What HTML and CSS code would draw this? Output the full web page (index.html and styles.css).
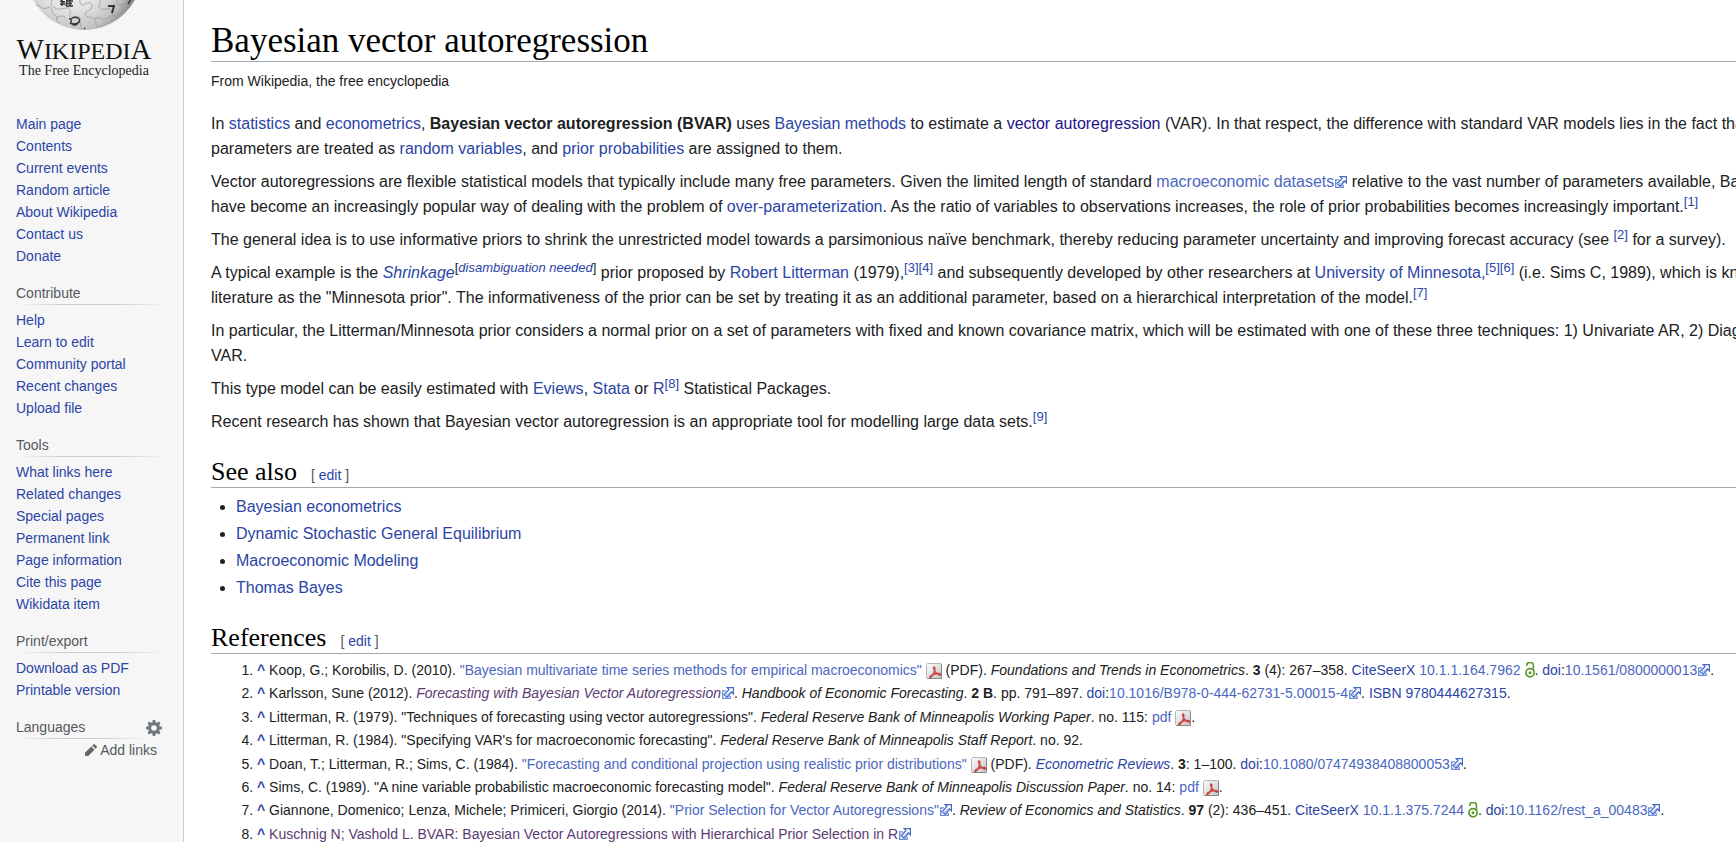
FILE: index.html
```html
<!DOCTYPE html>
<html lang="en">
<head>
<meta charset="utf-8">
<title>Bayesian vector autoregression - Wikipedia</title>
<link rel="stylesheet" href="styles.css">
</head>
<body>
<svg class="sprite" aria-hidden="true">
  <defs>
    <linearGradient id="page-fill" x1="0" y1="0" x2="1" y2="1"><stop offset="0" stop-color="#fff"/><stop offset="1" stop-color="#c4c4c4"/></linearGradient>
    <symbol id="ext" viewBox="0 0 12 12">
      <path d="M4 3.800H.7v7.500h7.500V9" fill="#fff" stroke="#6c8ad6" stroke-width="1.300"/>
      <path d="M5.200.6h6.200v6.200L9.500 5 6.800 8.800 5 10.200 2 7.600l1.600-1.400L7 2.500z" fill="#fff" stroke="#4468c8" stroke-width="1.200"/>
      <path d="M4.200 7.700l1.300.6 3-3.700" fill="none" stroke="#6c8ad6"/>
    </symbol>
    <symbol id="pdf" viewBox="0 0 16 16">
      <path d="M1.500.5h13a1 1 0 0 1 1 1v13a1 1 0 0 1-1 1h-13l-1-1v-13z" fill="url(#page-fill)" stroke="#b4b4b4"/>
      <path d="M15.500 1v14.500H1" fill="none" stroke="#888"/>
      <path d="M8 4c1.400 0 .8 3 .3 4.700C7.300 11.500 5.500 14 4.500 14.500c-1.300.4-1-1 1-2.200 2-1.200 4.500-1.800 7-1.800 2.800 0 2.700 1.700.9 1.500C11.200 11.500 8.600 8.500 8 6.500 7.500 5 7.400 4 8 4z" fill="none" stroke="#cb4543" stroke-width="1.400"/>
    </symbol>
    <symbol id="lock" viewBox="0 0 10 16">
      <circle cx="5" cy="10.800" r="4.100" fill="none" stroke="#5b9a2b" stroke-width="1.700"/>
      <circle cx="5" cy="10.800" r="1.500" fill="#5b9a2b"/>
      <path d="M1.700 4V3.300a2.900 2.500 0 0 1 6.700 0V9" fill="none" stroke="#5b9a2b" stroke-width="1.600"/>
    </symbol>
  </defs>
</svg>
<div class="layout">
  <nav class="sidebar">
    <a class="logo" href="#" aria-label="Wikipedia, the free encyclopedia">
      <svg class="globe" viewBox="0 0 120 31" aria-hidden="true">
        <defs><radialGradient id="ball" gradientUnits="userSpaceOnUse" cx="48" cy="-22" r="66"><stop offset="0" stop-color="#fff"/><stop offset=".5" stop-color="#e2e2e2"/><stop offset=".8" stop-color="#c2c2c2"/><stop offset="1" stop-color="#858585"/></radialGradient></defs>
        <circle cx="60" cy="-28" r="58" fill="url(#ball)"/>
        <g fill="none" stroke="#999" stroke-width=".8">
          <path d="M12 5c5 0 6 5 11 3 3-2 5 0 5 3 0 4 5 4 5 7-1 3 1 4 3 5"/>
          <path d="M28 0c-2 4 0 6 3 8s7 1 11 0c3-1 5 2 4 5-1 4 2 6 5 4 4-2 6 1 5 4-1 3 2 6 2 8"/>
          <path d="M56 0c-1 5 3 6 5 4 4-3 8-1 7 3-1 4-6 3-7 7 0 4 5 2 9 5 3 2 1 5 3 8"/>
          <path d="M76 0c1 4-3 6 0 8 3 3 6 0 9 1 4 1 2 6 5 7 2 1 4-2 6-1M93 0c-1 4 2 6 4 5 3-1 5-2 7 0M33 18c4-3 7-2 9 0M70 19c5-3 7 1 11 0 4-2 6-4 10-3"/>
        </g>
        <g fill="none" stroke="#333" stroke-width="1.400">
          <path d="M38 0v6M36 1l5 1M36 4h5M43 0l-1 6M42 1h7M42 3.500h6M42 6h7M46 0v6"/>
          <path d="M84 6h6l-2 7" stroke-width="2"/>
          <path d="M45 19c4-2 2 4 1 4M48 18c5-2 9 1 7 4s-8 2-9 1M48 24c2 2 5 1 6-1"/>
          <path d="M108-2l-4 6M60 28l1 1"/>
        </g>
      </svg>
      <span class="wordmark"><span class="wordmark-cap">W</span>IKIPEDI<span class="wordmark-cap">A</span></span>
      <span class="tagline">The Free Encyclopedia</span>
    </a>
    <section class="portal">
      <ul>
        <li><a href="#">Main page</a></li><li><a href="#">Contents</a></li><li><a href="#">Current events</a></li><li><a href="#">Random article</a></li><li><a href="#">About Wikipedia</a></li><li><a href="#">Contact us</a></li><li><a href="#">Donate</a></li>
      </ul>
    </section>
    <section class="portal">
      <h3>Contribute</h3>
      <ul>
        <li><a href="#">Help</a></li><li><a href="#">Learn to edit</a></li><li><a href="#">Community portal</a></li><li><a href="#">Recent changes</a></li><li><a href="#">Upload file</a></li>
      </ul>
    </section>
    <section class="portal">
      <h3>Tools</h3>
      <ul>
        <li><a href="#">What links here</a></li><li><a href="#">Related changes</a></li><li><a href="#">Special pages</a></li><li><a href="#">Permanent link</a></li><li><a href="#">Page information</a></li><li><a href="#">Cite this page</a></li><li><a href="#">Wikidata item</a></li>
      </ul>
    </section>
    <section class="portal">
      <h3>Print/export</h3>
      <ul>
        <li><a href="#">Download as PDF</a></li><li><a href="#">Printable version</a></li>
      </ul>
    </section>
    <section class="portal">
      <div class="lang-head">
        <h3>Languages</h3>
        <button class="gear" type="button" aria-label="Language settings">
          <svg viewBox="0 0 16 16" width="16" height="16"><g fill="#72777d"><path fill-rule="evenodd" d="M8 2a6 6 0 1 0 0 12A6 6 0 0 0 8 2zm0 3.200a2.800 2.800 0 1 1 0 5.600 2.800 2.800 0 0 1 0-5.600z"/><path id="tooth" d="M6.300 3l.5-3h2.400l.5 3z"/><use href="#tooth" transform="rotate(45 8 8)"/><use href="#tooth" transform="rotate(90 8 8)"/><use href="#tooth" transform="rotate(135 8 8)"/><use href="#tooth" transform="rotate(180 8 8)"/><use href="#tooth" transform="rotate(225 8 8)"/><use href="#tooth" transform="rotate(270 8 8)"/><use href="#tooth" transform="rotate(315 8 8)"/></g></svg>
        </button>
      </div>
      <a class="add-links" href="#"><svg viewBox="0 0 12 12" width="12" height="12" aria-hidden="true"><path d="M0 12V8.800L6.300 2.500l3.200 3.200L3.200 12zM7.200 1.600L8.300.5q.8-.8 1.600 0l1.600 1.600q.8.800 0 1.600l-1.100 1.100z" fill="#666"/></svg>Add links</a>
    </section>
  </nav>
  <main class="content">
    <h1>Bayesian vector autoregression</h1>
    <div class="tag">From Wikipedia, the free encyclopedia</div>
    <p>In <a href="#">statistics</a> and <a href="#">econometrics</a>, <b>Bayesian vector autoregression (BVAR)</b> uses <a href="#">Bayesian methods</a> to estimate a <a class="seen" href="#">vector autoregression</a> (VAR). In that respect, the difference with standard VAR models lies in the fact that the<br>parameters are treated as <a href="#">random variables</a>, and <a href="#">prior probabilities</a> are assigned to them.</p>
    <p>Vector autoregressions are flexible statistical models that typically include many free parameters. Given the limited length of standard <a class="out" href="#">macroeconomic datasets<svg class="ext"><use href="#ext"/></svg></a> relative to the vast number of parameters available, Bayesian<br>have become an increasingly popular way of dealing with the problem of <a href="#">over-parameterization</a>. As the ratio of variables to observations increases, the role of prior probabilities becomes increasingly important.<sup><a href="#">[1]</a></sup></p>
    <p>The general idea is to use informative priors to shrink the unrestricted model towards a parsimonious naïve benchmark, thereby reducing parameter uncertainty and improving forecast accuracy (see <sup><a href="#">[2]</a></sup> for a survey).</p>
    <p>A typical example is the <a href="#"><i>Shrinkage</i></a><sup>[<a href="#"><i>disambiguation needed</i></a>]</sup> prior proposed by <a href="#">Robert Litterman</a> (1979),<sup><a href="#">[3]</a><a href="#">[4]</a></sup> and subsequently developed by other researchers at <a href="#">University of Minnesota,</a><sup><a href="#">[5]</a><a href="#">[6]</a></sup> (i.e. Sims C, 1989), which is known<br>literature as the "Minnesota prior". The informativeness of the prior can be set by treating it as an additional parameter, based on a hierarchical interpretation of the model.<sup><a href="#">[7]</a></sup></p>
    <p>In particular, the Litterman/Minnesota prior considers a normal prior on a set of parameters with fixed and known covariance matrix, which will be estimated with one of these three techniques: 1) Univariate AR, 2) Diagonal<br>VAR.</p>
    <p>This type model can be easily estimated with <a href="#">Eviews</a>, <a href="#">Stata</a> or <a href="#">R</a><sup><a href="#">[8]</a></sup> Statistical Packages.</p>
    <p>Recent research has shown that Bayesian vector autoregression is an appropriate tool for modelling large data sets.<sup><a href="#">[9]</a></sup></p>
    <div class="section-head"><h2>See also</h2><span class="edit">[ <a href="#">edit</a> ]</span></div>
    <ul class="see-also">
      <li><a href="#">Bayesian econometrics</a></li>
      <li><a href="#">Dynamic Stochastic General Equilibrium</a></li>
      <li><a href="#">Macroeconomic Modeling</a></li>
      <li><a href="#">Thomas Bayes</a></li>
    </ul>
    <div class="section-head"><h2>References</h2><span class="edit">[ <a href="#">edit</a> ]</span></div>
    <ol class="refs">
      <li><a class="up" href="#">^</a> Koop, G.; Korobilis, D. (2010). <a class="out" href="#">"Bayesian multivariate time series methods for empirical macroeconomics"<svg class="pdf"><use href="#pdf"/></svg></a> (PDF). <i>Foundations and Trends in Econometrics</i>. <b>3</b> (4): 267–358. <a href="#">CiteSeerX</a> <a class="out" href="#">10.1.1.164.7962<svg class="lock"><use href="#lock"/></svg></a>. <a href="#">doi</a>:<a class="out" href="#">10.1561/0800000013<svg class="ext"><use href="#ext"/></svg></a>.</li>
      <li><a class="up" href="#">^</a> Karlsson, Sune (2012). <a class="out-seen" href="#"><i>Forecasting with Bayesian Vector Autoregression</i><svg class="ext"><use href="#ext"/></svg></a>. <i>Handbook of Economic Forecasting</i>. <b>2 B</b>. pp. 791–897. <a href="#">doi</a>:<a class="out" href="#">10.1016/B978-0-444-62731-5.00015-4<svg class="ext"><use href="#ext"/></svg></a>. <a href="#">ISBN</a> <a href="#">9780444627315</a>.</li>
      <li><a class="up" href="#">^</a> Litterman, R. (1979). "Techniques of forecasting using vector autoregressions". <i>Federal Reserve Bank of Minneapolis Working Paper</i>. no. 115: <a class="out" href="#">pdf<svg class="pdf"><use href="#pdf"/></svg></a>.</li>
      <li><a class="up" href="#">^</a> Litterman, R. (1984). "Specifying VAR's for macroeconomic forecasting". <i>Federal Reserve Bank of Minneapolis Staff Report</i>. no. 92.</li>
      <li><a class="up" href="#">^</a> Doan, T.; Litterman, R.; Sims, C. (1984). <a class="out" href="#">"Forecasting and conditional projection using realistic prior distributions"<svg class="pdf"><use href="#pdf"/></svg></a> (PDF). <a href="#"><i>Econometric Reviews</i></a>. <b>3</b>: 1–100. <a href="#">doi</a>:<a class="out" href="#">10.1080/07474938408800053<svg class="ext"><use href="#ext"/></svg></a>.</li>
      <li><a class="up" href="#">^</a> Sims, C. (1989). "A nine variable probabilistic macroeconomic forecasting model". <i>Federal Reserve Bank of Minneapolis Discussion Paper</i>. no. 14: <a class="out" href="#">pdf<svg class="pdf"><use href="#pdf"/></svg></a>.</li>
      <li><a class="up" href="#">^</a> Giannone, Domenico; Lenza, Michele; Primiceri, Giorgio (2014). <a class="out" href="#">"Prior Selection for Vector Autoregressions"<svg class="ext"><use href="#ext"/></svg></a>. <i>Review of Economics and Statistics</i>. <b>97</b> (2): 436–451. <a href="#">CiteSeerX</a> <a class="out" href="#">10.1.1.375.7244<svg class="lock"><use href="#lock"/></svg></a>. <a href="#">doi</a>:<a class="out" href="#">10.1162/rest_a_00483<svg class="ext"><use href="#ext"/></svg></a>.</li>
      <li><a class="up" href="#">^</a> <a class="out-seen" href="#">Kuschnig N; Vashold L. BVAR: Bayesian Vector Autoregressions with Hierarchical Prior Selection in R<svg class="ext"><use href="#ext"/></svg></a></li>
    </ol>
  </main>
</div>
</body>
</html>
```
FILE: styles.css
```css
* { box-sizing: border-box; }

body {
  margin: 0;
  background: #fff;
  color: #202122;
  font: 16px/25px "Liberation Sans", Arial, sans-serif;
  overflow: hidden;
}

a { color: #2b45a6; text-decoration: none; }
a.seen { color: #23138a; }
a.out { color: #4b67c0; }
a.out-seen { color: #5c3a72; }
ul, ol { margin: 0; padding: 0; }
h1, h2, h3 { margin: 0; font-weight: 400; }

.sprite { display: block; width: 0; height: 0; }

.layout { display: flex; min-height: 100vh; }

/* Sidebar */
.sidebar {
  flex: none;
  width: 184px;
  padding: 0 16px;
  background: #f6f6f6;
  border-right: 1px solid #b4d2f0;
  font-size: 14px;
  line-height: 22px;
}
.logo {
  display: flex;
  flex-direction: column;
  align-items: center;
  width: 136px;
  height: 113px;
  color: #111;
  font-family: "Liberation Serif", "Times New Roman", serif;
  white-space: nowrap;
}
.globe { flex: none; width: 120px; height: 31px; }
.wordmark { padding-top: 5px; font-size: 24px; line-height: 26px; }
.wordmark-cap { font-size: 29px; }
.tagline { font-size: 14px; line-height: 14px; color: #222; }

.portal { margin-bottom: 15px; }
.portal ul { list-style: none; }
.portal h3 {
  margin-bottom: 4px;
  border-bottom: 1px solid;
  border-image: linear-gradient(to right, rgba(200, 204, 209, 0), #c8ccd1 33%, #c8ccd1 66%, rgba(200, 204, 209, 0)) 1;
  color: #54595d;
  font-size: 14px;
}
.lang-head { display: flex; width: 146px; }
.lang-head h3 { flex: 1; margin-bottom: 0; }
.gear {
  display: flex;
  align-items: center;
  padding: 0;
  border: 0;
  background: none;
}
.add-links {
  display: flex;
  align-items: center;
  justify-content: flex-end;
  gap: 3px;
  width: 141px;
  color: #54595d;
}

/* Article */
.content {
  flex: 1;
  min-width: 0;
  padding-left: 27px;
  white-space: nowrap;
}
h1 {
  padding-top: 20px;
  border-bottom: 1px solid #a2a9b1;
  color: #000;
  font: 35px/41px Georgia, "Liberation Serif", serif;
}
.tag { margin: 7px 0 18px; font-size: 14px; line-height: 24px; }
p { margin: 0 0 8px; }
sup { font-size: 13px; line-height: 1; }

.section-head {
  display: flex;
  align-items: baseline;
  gap: 14px;
  margin-top: 22px;
  border-bottom: 1px solid #a2a9b1;
}
h2 { color: #000; font: 26px/31px Georgia, "Liberation Serif", serif; }
.edit { font-size: 14px; line-height: 22px; color: #54595d; }

.see-also { margin-top: 6px; padding-left: 25px; }
.see-also li { margin-bottom: 2px; }

.refs {
  margin-top: 5px;
  padding-left: 46px;
  font-size: 14px;
  line-height: 1.6;
}
.refs li { margin-bottom: 1px; }
.up { font-weight: 700; }

.ext { width: 12px; height: 12px; margin-left: 1px; vertical-align: -1px; }
.pdf { width: 16px; height: 16px; margin-left: 4px; vertical-align: -4px; }
.lock { width: 10px; height: 16px; margin-left: 4px; vertical-align: -3px; }
.refs svg { margin-top: -4px; }
```
